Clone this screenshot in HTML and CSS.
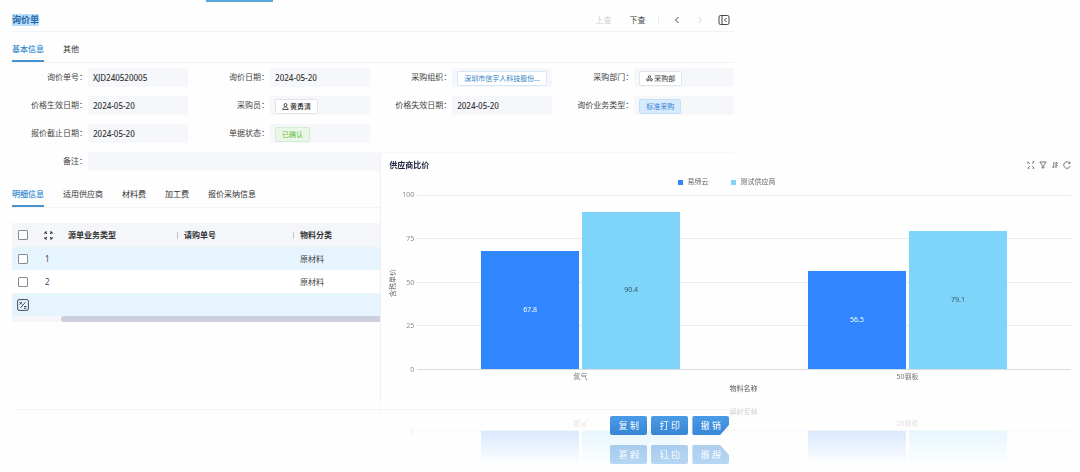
FILE: index.html
```html
<!DOCTYPE html>
<html lang="zh-CN">
<head>
<meta charset="utf-8">
<title>询价单</title>
<link rel="stylesheet" href="styles.css">
</head>
<body>
<main class="stage">
  <section class="sheet">
    <div class="top-strip"><span class="top-mark"></span></div>
    <header class="sheet-head">
      <h1 class="title"><span>询价单</span></h1>
      <div class="tools">
        <button class="tool" disabled>上查</button>
        <button class="tool">下查</button>
        <span class="sep"></span>
        <button class="tool icon" aria-label="上一张"><svg width="10" height="10" viewBox="0 0 10 10"><path d="M6.500 2 3.500 5l3 3"/></svg></button>
        <button class="tool icon" aria-label="下一张" disabled><svg width="10" height="10" viewBox="0 0 10 10"><path d="M3.500 2l3 3-3 3"/></svg></button>
        <button class="tool icon" aria-label="收起"><svg width="12" height="12" viewBox="0 0 12 12"><rect x="1" y="1.5" width="10" height="9" rx="1.5"/><path d="M4 1.500v9M8.500 4 6.500 6l2 2"/></svg></button>
      </div>
    </header>
    <nav class="tabs">
      <a class="tab active" href="#base">基本信息</a>
      <a class="tab" href="#other">其他</a>
    </nav>
    <form class="form" id="base">
      <div class="item"><label for="f1">询价单号：</label><input id="f1" value="XJD240520005" readonly></div>
      <div class="item"><label for="f2">询价日期：</label><input id="f2" value="2024-05-20" readonly></div>
      <div class="item"><label for="f3">采购组织：</label><output id="f3"><span class="tag link">深圳市信宇人科技股份...</span></output></div>
      <div class="item"><label for="f4">采购部门：</label><output id="f4"><span class="tag"><svg width="7" height="7" viewBox="0 0 8 8"><circle cx="4" cy="2" r="1.3"/><circle cx="2" cy="5.5" r="1.3"/><circle cx="6" cy="5.5" r="1.3"/></svg>采购部</span></output></div>
      <div class="item"><label for="f5">价格生效日期：</label><input id="f5" value="2024-05-20" readonly></div>
      <div class="item"><label for="f6">采购员：</label><output id="f6"><span class="tag strong"><svg width="7" height="7" viewBox="0 0 8 8"><circle cx="4" cy="2.3" r="1.7"/><path d="M1 7.500c0-4 6-4 6 0z"/></svg>黄勇清</span></output></div>
      <div class="item"><label for="f7">价格失效日期：</label><input id="f7" value="2024-05-20" readonly></div>
      <div class="item"><label for="f8">询价业务类型：</label><output id="f8"><span class="tag blue">标准采购</span></output></div>
      <div class="item"><label for="f9">报价截止日期：</label><input id="f9" value="2024-05-20" readonly></div>
      <div class="item"><label for="f10">单据状态：</label><output id="f10"><span class="tag green">已确认</span></output></div>
      <div class="item wide"><label for="f11">备注：</label><input id="f11" readonly></div>
    </form>
    <nav class="tabs detail">
      <a class="tab active" href="#rows">明细信息</a>
      <a class="tab" href="#s">适用供应商</a>
      <a class="tab" href="#m">材料费</a>
      <a class="tab" href="#p">加工费</a>
      <a class="tab" href="#q">报价采纳信息</a>
    </nav>
    <div class="grid" id="rows">
      <table>
        <colgroup><col class="c-check"><col class="c-no"><col class="c-data"><col class="c-data"><col></colgroup>
        <thead>
          <tr>
            <th><input type="checkbox" aria-label="全选"></th>
            <th><svg class="expand" width="9" height="9" viewBox="0 0 9 9"><path d="M1 3V1h2M6 1h2v2M8 6v2H6M3 8H1V6M1 1l2 2M8 1 6 3M8 8 6 6M1 8l2-2"/></svg></th>
            <th>源单业务类型</th><th class="split">请购单号</th><th class="split">物料分类</th>
          </tr>
        </thead>
        <tbody>
          <tr class="tint"><td><input type="checkbox" aria-label="第1行"></td><td>1</td><td></td><td></td><td>原材料</td></tr>
          <tr><td><input type="checkbox" aria-label="第2行"></td><td>2</td><td></td><td></td><td>原材料</td></tr>
          <tr class="tint"><td><svg class="calc" width="12" height="12" viewBox="0 0 12 12"><rect x=".6" y=".6" width="10.8" height="10.8" rx="1.5"/><path d="M8.500 3.200 3.500 8.800M2.500 3l2.500 2.500M5 3 2.500 5.500M7 7.500h2.500M7 9.300h2.500"/></svg></td><td></td><td></td><td></td><td></td></tr>
        </tbody>
      </table>
      <div class="scroll"><div class="thumb"></div></div>
    </div>
    <footer class="actions">
      <div class="buttons">
        <button class="act">复 制</button>
        <button class="act">打 印</button>
        <button class="act cut">撤 销</button>
      </div>
    </footer>
  </section>

  <section class="card">
    <header class="card-head">
      <h2>供应商比价</h2>
      <div class="card-tools">
        <button aria-label="全屏"><svg width="8" height="8" viewBox="0 0 8 8"><path d="M.8 2.500V.8M.8.8l2 2M7.200.8l-2 2M.8 7.200l2-2M7.200 7.200l-2-2M5.500.8h1.700M.8 7.200h1.700M5.500 7.200h1.700"/></svg></button>
        <button aria-label="筛选"><svg width="8" height="8" viewBox="0 0 8 8"><path d="M.8 1h6.400L4.800 4.200v2.800H3.200V4.200z"/></svg></button>
        <button aria-label="排序"><svg width="8" height="8" viewBox="0 0 8 8"><path d="M2.800 1v6L1 5.200M5 7V1l2 2M5 4.500h1.500"/></svg></button>
        <button aria-label="刷新"><svg width="8" height="8" viewBox="0 0 8 8"><path d="M6.800 2.200A3.300 3.300 0 1 0 7.200 5M7 .8v1.700H5.300"/></svg></button>
      </div>
    </header>
    <ul class="legend">
      <li><i class="dot a"></i>易缔云</li>
      <li><i class="dot b"></i>测试供应商</li>
    </ul>
    <div class="chart">
      <div class="y-title"><span>含税单价</span></div>
      <div class="y-axis"><span>100</span><span>75</span><span>50</span><span>25</span><span>0</span></div>
      <div class="plot">
        <div class="group">
          <div class="bar a" style="height:67.8%">67.8</div>
          <div class="bar b" style="height:90.4%">90.4</div>
        </div>
        <div class="group">
          <div class="bar a" style="height:56.5%">56.5</div>
          <div class="bar b" style="height:79.1%">79.1</div>
        </div>
      </div>
      <div class="x-axis"><span>氮气</span><span>50钢板</span></div>
    </div>
    <div class="x-title">物料名称</div>
  </section>
</main>
</body>
</html>
```

FILE: styles.css
```css
* { box-sizing: border-box; }
body {
  margin: 0;
  background: #fefefe;
  color: #444;
  font: 8px/12px "Noto Sans", "Noto Sans CJK SC", sans-serif;
}
button, input { font: inherit; color: inherit; }
button { border: 0; background: none; padding: 0; }
svg { fill: none; stroke: currentColor; flex: none; }
h1, h2, ul { margin: 0; padding: 0; }
a { color: inherit; text-decoration: none; }

.stage { position: relative; overflow: hidden; min-height: 100vh; }
.sheet { width: 68%; }

.top-strip { height: 8px; padding-left: 28%; }
.top-mark { display: block; width: 67px; height: 2px; background: #5aa5dc; }

.sheet-head {
  display: flex;
  justify-content: space-between;
  align-items: center;
  height: 24px;
  margin-left: 12px;
  padding-right: 4px;
  border-bottom: 1px solid #f2f2f3;
}
.title { font-size: 9px; line-height: 12px; color: #2467a8; }
.title span { display: block; background: #b9defa; }
.tools { display: flex; align-items: center; gap: 13px; }
.tool { height: 12px; color: #444; }
.tool:disabled { color: #d2d2d2; }
.tool:first-child { margin-right: 5px; }
.tool.icon { display: flex; align-items: center; }
.sep { width: 1px; height: 8px; background: #ececec; }

.tabs {
  display: flex;
  gap: 19px;
  margin: 8px 0 0 12px;
  border-bottom: 1px solid #f3f3f5;
}
.tab { padding: 3px 0 5px; border-bottom: 2px solid transparent; line-height: 12px; color: #333; }
.tab.active { color: #2d86cf; border-color: #4791cc; font-weight: 500; }

.form {
  display: grid;
  grid-template-columns: repeat(4, 1fr);
  gap: 9px 0;
  margin: 5px 0 0 6px;
}
.item { display: flex; min-width: 0; }
.item.wide { grid-column: 1 / -1; }
.item label { width: 82px; padding-right: 1px; text-align: right; line-height: 18px; white-space: nowrap; }
.item input, .item output {
  flex: 1;
  min-width: 0;
  height: 19px;
  border: 0;
  border-radius: 2px;
  padding: 0 5px;
  background: #f6f7fb;
}
.item input { font-weight: 500; color: #333; }
.item output { display: flex; align-items: center; padding: 2px 5px 0; }
.tag {
  display: flex;
  align-items: center;
  gap: 1px;
  height: 15px;
  padding: 0 6px;
  border: 1px solid #e3e4e8;
  border-radius: 2px;
  background: #fff;
  font-size: 7px;
  line-height: 12px;
  white-space: nowrap;
  color: #333;
}
.tag.strong { font-weight: 500; }
.tag.link { color: #2f7fc4; border-color: #d6e8f6; }
.tag.blue { color: #2f80d0; background: #d6ebfd; border-color: #c3e0f8; }
.tag.green { color: #62bf3a; background: #eaf6e8; border-color: #d3ebce; }

.tabs.detail { margin-top: 14px; }

.grid { margin: 15px 0 0 12px; background: #f5f6fa; }
table { width: 100%; border-collapse: collapse; table-layout: fixed; }
.c-check { width: 28px; }
.c-no { width: 21px; }
.c-data { width: 116px; }
th, td { height: 23px; padding: 0 0 0 7px; text-align: left; }
th { height: 24px; font-weight: 700; color: #333; }
th:first-child, td:first-child { padding-left: 5px; }
th:nth-child(2), td:nth-child(2) { padding-left: 4px; }
tbody tr { background: #fff; }
tbody tr.tint { background: #e6f4fe; }
td:nth-child(2) { padding-left: 5px; }
th.split { background: linear-gradient(#c4c6cc, #c4c6cc) no-repeat left center / 1px 7px; }
td svg, th svg { display: block; }
table input {
  appearance: none;
  display: block;
  width: 10px;
  height: 10px;
  margin: 0 0 0 1px;
  border: 1px solid #858b92;
  border-radius: 1px;
  background: #fff;
}
.calc { color: #3d4d5a; }
.expand { color: #333; }
.scroll { height: 6px; padding-left: 49px; }
.thumb { height: 6px; border-radius: 3px; background: #cbd0dc; }

.actions {
  position: relative;
  z-index: 2;
  display: flex;
  justify-content: flex-end;
  margin: 87px 0 0 16px;
  padding: 6px 5px 0 0;
  border-top: 1px solid #f5f5f6;
}
.buttons { display: flex; gap: 4px; -webkit-box-reflect: below 10px linear-gradient(rgba(0, 0, 0, .4), rgba(0, 0, 0, .4)); }
.act {
  width: 37px;
  height: 19px;
  border-radius: 2px;
  background: linear-gradient(#4a9be6, #3886d6);
  color: #fff;
  font-size: 9px;
}
.act.cut { clip-path: polygon(0 0, 100% 0, 100% 45%, 75% 100%, 0 100%); }

.card {
  position: absolute;
  z-index: 1;
  top: 153px;
  left: 35.2%;
  right: 0;
  padding: 5px 9px 6px 8px;
  border-left: 1px solid #f0f1f3;
  border-radius: 4px 0 0 0;
  background: #fefefe;
  font-size: 7px;
  line-height: 10px;
  -webkit-box-reflect: below 0 linear-gradient(transparent 74%, rgba(0, 0, 0, .34));
}
.card-head { display: flex; justify-content: space-between; align-items: center; height: 13px; }
.card-head h2 { font-size: 8px; line-height: 12px; color: #1d2340; }
.card-tools { display: flex; gap: 4px; color: #777; }
.card-tools button { display: flex; }
.legend { display: flex; justify-content: center; gap: 22px; margin-top: 6px; padding-right: 7px; list-style: none; color: #666; }
.legend li { display: flex; align-items: center; gap: 5px; }
.dot { width: 5px; height: 5px; }
.a { background: #2f86ff; color: #fff; }
.b { background: #7fd4fa; color: #35566b; }

.chart {
  display: grid;
  grid-template-columns: 8px 14px 1fr;
  grid-template-rows: 175px auto;
  column-gap: 3px;
  margin-top: 8px;
}
.y-title { display: flex; align-items: center; justify-content: center; color: #666; }
.y-title span { writing-mode: vertical-rl; text-orientation: sideways; transform: rotate(180deg); }
.y-axis { display: flex; flex-direction: column; justify-content: space-between; margin: -5px 0; text-align: right; color: #8c8c8c; }
.plot {
  display: flex;
  border-bottom: 1px solid #d8dadd;
  background: repeating-linear-gradient(#e9eaec 0 1px, transparent 1px 25%);
}
.group { flex: 1; display: flex; justify-content: center; align-items: flex-end; gap: 3px; }
.bar { width: 30%; display: flex; align-items: center; justify-content: center; }
.x-axis { grid-column: 3; display: flex; padding-top: 2px; color: #777; }
.x-axis span { flex: 1; text-align: center; }
.x-title { margin-top: 2px; padding-left: 27px; text-align: center; color: #555; }
```
